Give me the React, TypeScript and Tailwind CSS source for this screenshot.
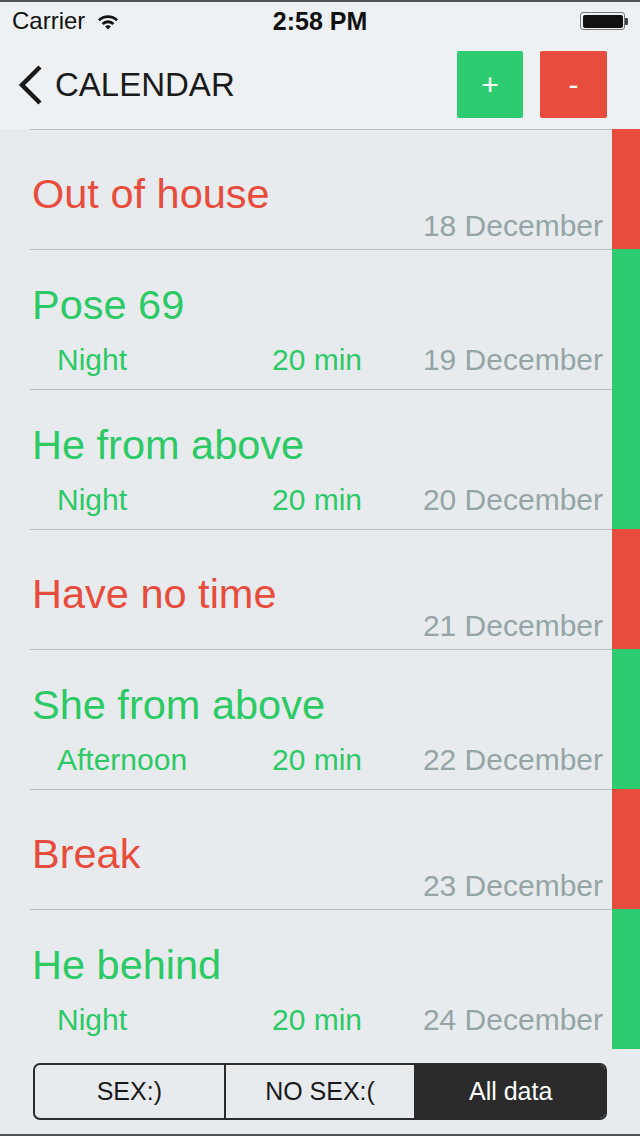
import type { ReactNode } from 'react';

type Entry = {
  title: string;
  date: string;
  sex: boolean;
  time?: string;
  duration?: string;
};

const entries: Entry[] = [
  { title: 'Out of house', date: '18 December', sex: false },
  { title: 'Pose 69', date: '19 December', sex: true, time: 'Night', duration: '20 min' },
  { title: 'He from above', date: '20 December', sex: true, time: 'Night', duration: '20 min' },
  { title: 'Have no time', date: '21 December', sex: false },
  { title: 'She from above', date: '22 December', sex: true, time: 'Afternoon', duration: '20 min' },
  { title: 'Break', date: '23 December', sex: false },
  { title: 'He behind', date: '24 December', sex: true, time: 'Night', duration: '20 min' },
];

function StatusBar() {
  return (
    <div className="flex h-[38px] items-center justify-between px-[12px] text-[24px] leading-none text-[#111]">
      <div className="flex w-[200px] items-center gap-[12px]">
        <span>Carrier</span>
        <svg width="22" height="17" viewBox="0 0 22 17">
          <path d="M1 6.2a14.5 14.5 0 0 1 20 0l-1.9 2a11.8 11.8 0 0 0-16.2 0z" fill="#111" />
          <path d="M4.6 9.9a9.3 9.3 0 0 1 12.8 0l-1.9 2a6.6 6.6 0 0 0-9 0z" fill="#111" />
          <path d="M8.2 13.6a4 4 0 0 1 5.6 0L11 16.5z" fill="#111" />
        </svg>
      </div>
      <span className="text-[25px] font-semibold">2:58 PM</span>
      <div className="flex w-[200px] justify-end">
        <div className="flex items-center">
          <div className="flex h-[18px] w-[45px] items-center rounded-[3px] border border-[#777] p-[1.5px]">
            <div className="h-full w-full rounded-[2px] bg-[#111]" />
          </div>
          <div className="h-[7px] w-[2.5px] rounded-r-[1px] bg-[#444]" />
        </div>
      </div>
    </div>
  );
}

function NavBar() {
  return (
    <div className="flex h-[89px] items-center pl-[17px] pr-[33px]">
      <svg width="26" height="40" viewBox="0 0 26 40" className="shrink-0">
        <path d="M23 2 L5 20 L23 38" fill="none" stroke="#1a1a1a" strokeWidth="4.5" />
      </svg>
      <span className="ml-[12px] text-[33px] leading-none text-[#1a1a1a]">CALENDAR</span>
      <div className="ml-auto flex gap-[17px]">
        <button className="flex h-[67px] w-[66px] items-center justify-center rounded-[2px] bg-[#2ecc71] text-[30px] font-light leading-none text-white">
          +
        </button>
        <button className="flex h-[67px] w-[67px] items-center justify-center rounded-[2px] bg-[#e74c3c] text-[30px] font-light leading-none text-white">
          -
        </button>
      </div>
    </div>
  );
}

function Row({ entry }: { entry: Entry }) {
  const hasDetails = Boolean(entry.time);
  const color = entry.sex ? 'text-[#2cc965]' : 'text-[#e74c3c]';
  return (
    <div className={hasDetails ? 'flex h-[140px]' : 'flex h-[120px]'}>
      <div className="ml-[30px] flex flex-1 flex-col border-t border-[#b4bfc1]">
        <div
          className={
            hasDetails
              ? `pl-[2px] pt-[37px] text-[41.5px] leading-[36px] ${color}`
              : `pl-[2px] pt-[46px] text-[41.5px] leading-[36px] ${color}`
          }
        >
          {entry.title}
        </div>
        {hasDetails ? (
          <div className="mt-[22px] flex pr-[9px] text-[30px] leading-[30px]">
            <span className={`w-[242px] pl-[27px] ${color}`}>{entry.time}</span>
            <span className={color}>{entry.duration}</span>
            <span className="ml-auto text-[#95a5a6]">{entry.date}</span>
          </div>
        ) : (
          <div className="pr-[9px] text-right text-[30px] leading-[28px] text-[#95a5a6]">{entry.date}</div>
        )}
      </div>
      <div className={entry.sex ? 'w-[28px] bg-[#2ecc71]' : 'w-[28px] bg-[#e74c3c]'} />
    </div>
  );
}

function Segment({ children, active, last }: { children: ReactNode; active?: boolean; last?: boolean }) {
  return (
    <div
      className={
        (active ? 'bg-[#2b2b2b] text-white ' : 'text-[#1a1a1a] ') +
        (last ? '' : 'border-r-2 border-[#2b2b2b] ') +
        'flex flex-1 items-center justify-center text-[25px]'
      }
    >
      {children}
    </div>
  );
}

export default function App() {
  return (
    <div
      className="flex h-[1136px] w-[640px] flex-col overflow-hidden border-y-2 border-[#505356] bg-[#e8ebee]"
      style={{ fontFamily: '"Liberation Sans", Arial, sans-serif' }}
    >
      <div className="bg-[#eef1f3]">
        <StatusBar />
        <NavBar />
      </div>
      <div className="flex flex-col">
        {entries.map((entry) => (
          <Row key={entry.date} entry={entry} />
        ))}
      </div>
      <div className="flex flex-1 items-start px-[33px] pt-[14px]">
        <div className="flex h-[57px] w-full overflow-hidden rounded-[7px] border-2 border-[#2b2b2b]">
          <Segment>SEX:)</Segment>
          <Segment>NO SEX:(</Segment>
          <Segment active last>
            All data
          </Segment>
        </div>
      </div>
    </div>
  );
}
